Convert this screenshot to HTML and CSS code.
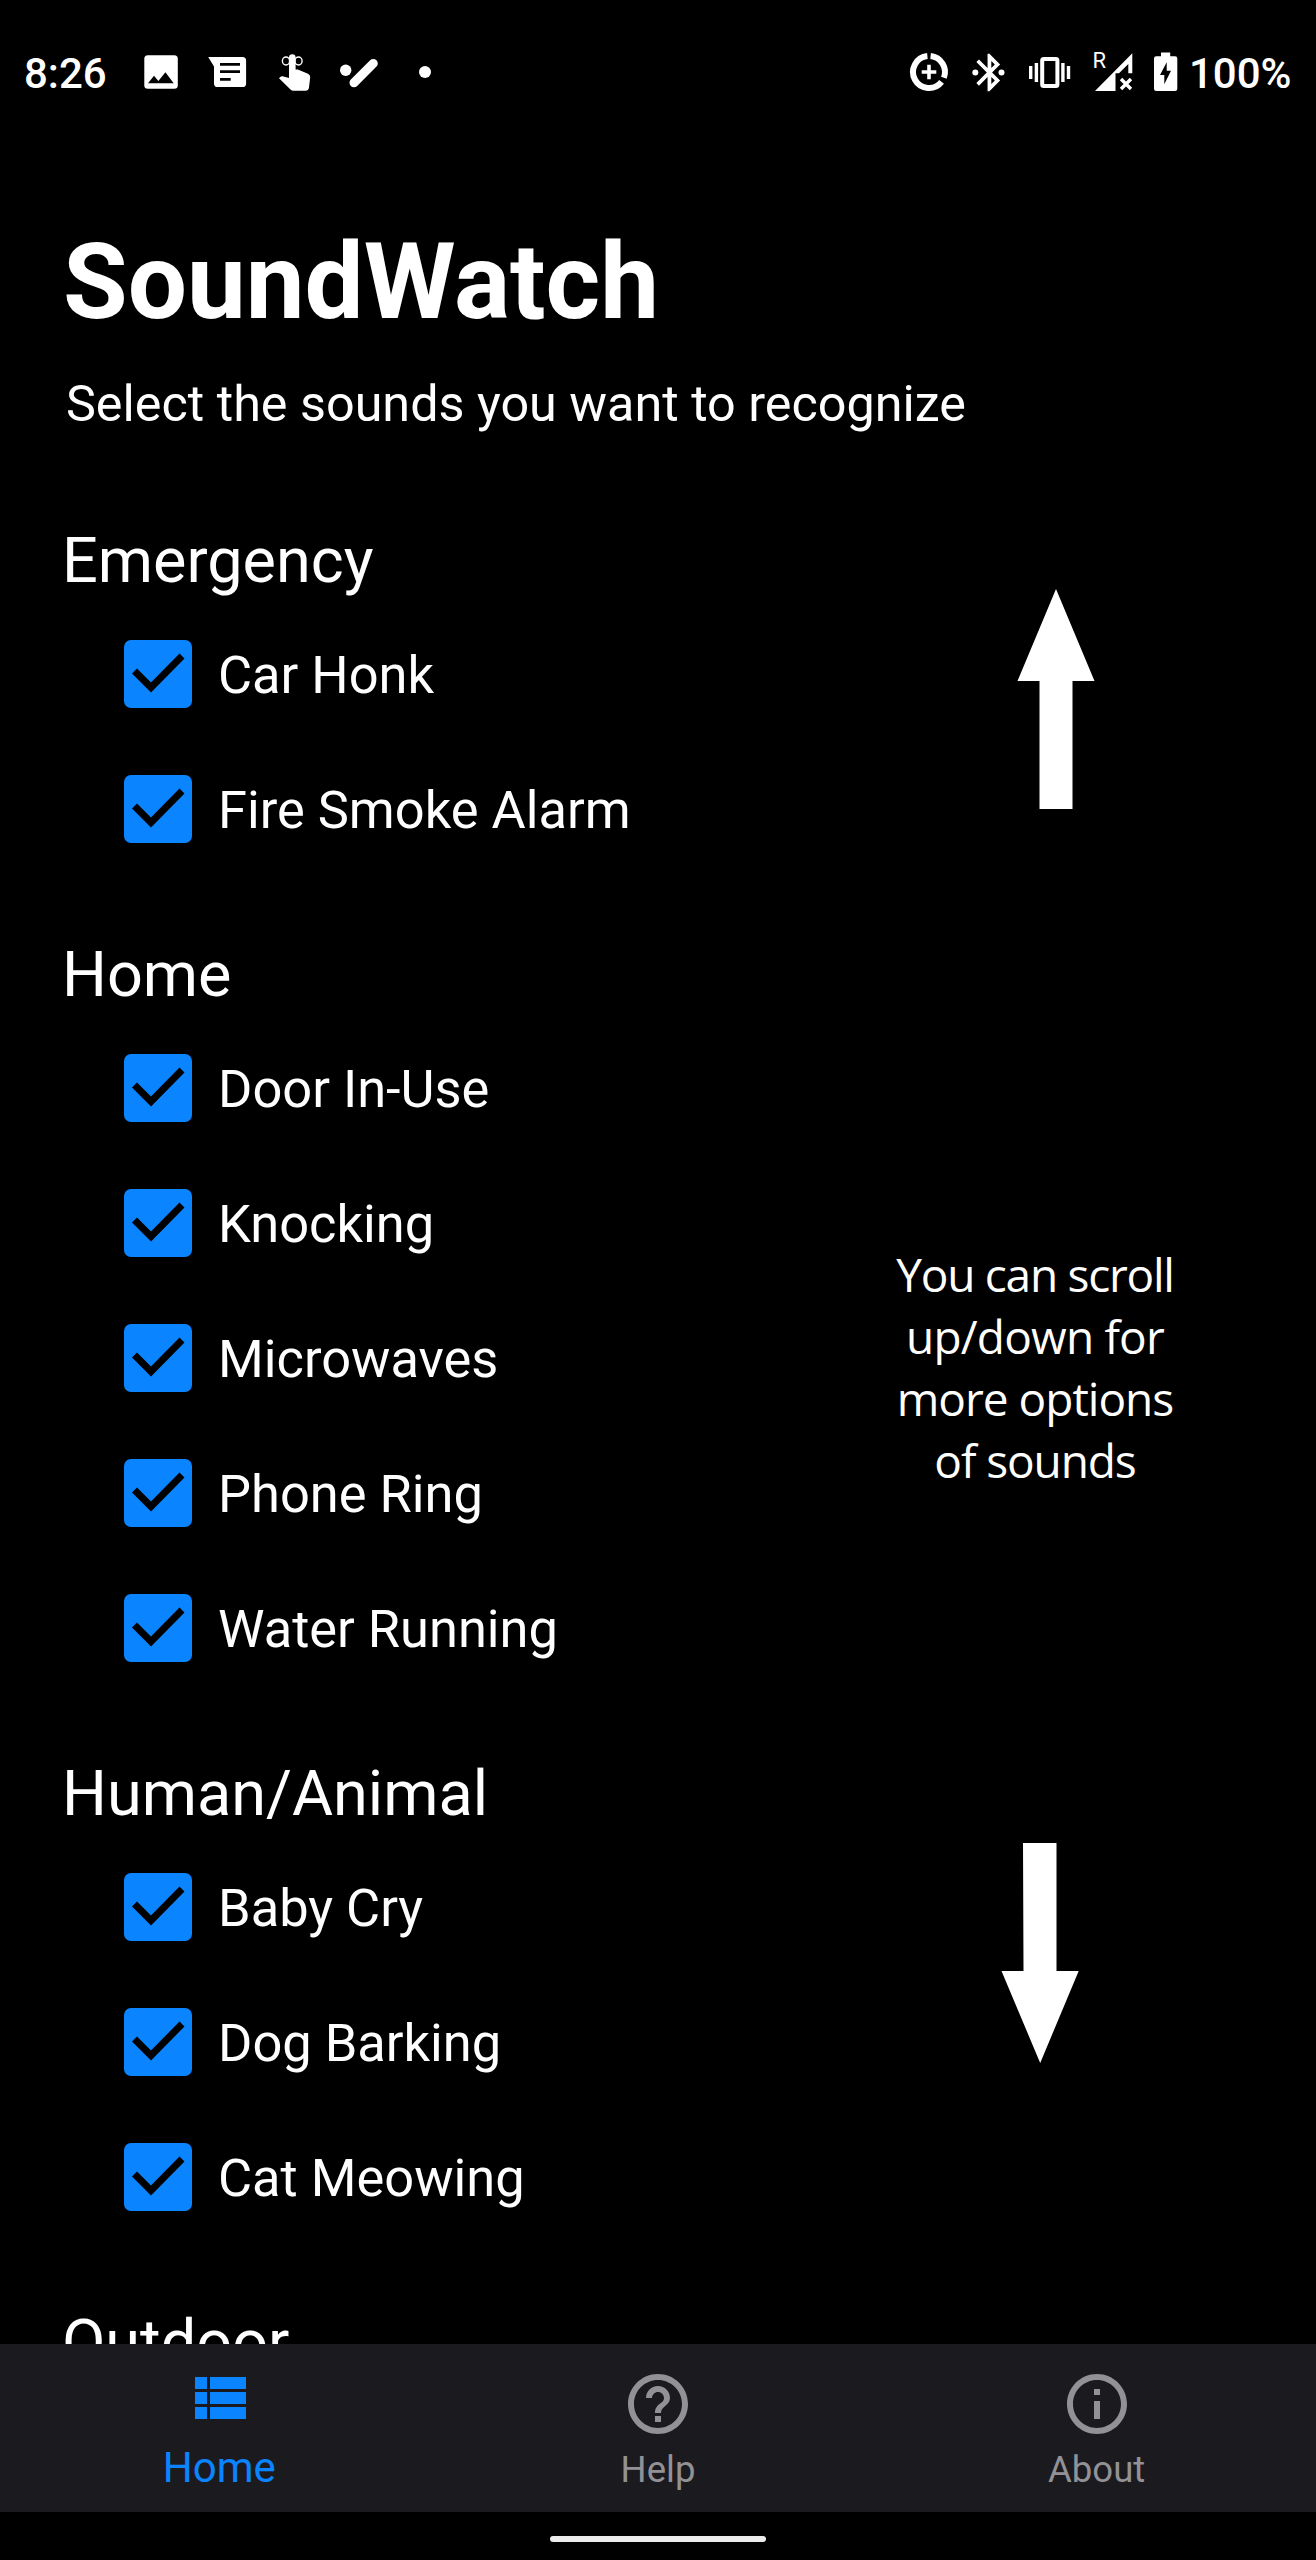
FILE: index.html
```html
<!DOCTYPE html>
<html lang="en">
<head>
<meta charset="utf-8">
<title>SoundWatch</title>
<link rel="stylesheet" href="styles.css">
</head>
<body>
<svg class="defs" width="0" height="0" aria-hidden="true">
  <symbol id="check" viewBox="0 0 68 68">
    <rect width="68" height="68" rx="7" fill="#0a84ff"/>
    <path d="M10.500 31 L27 47.500 L58 16" fill="none" stroke="#000" stroke-width="7"/>
  </symbol>
</svg>
<header class="status">
  <span class="clock">8:26</span>
  <svg class="cell" viewBox="128 39 66 66"><rect x="144.300" y="55.300" width="33.500" height="33.500" rx="3.500"/><path class="ink" d="M148 83.300l6-7.600 4.400 5.200 7-8.700 8.300 11.100z"/></svg>
  <svg class="cell" viewBox="194 39 66 66"><path d="M208.200 57H242.500a3.600 3.600 0 0 1 3.600 3.600V83.400a3.600 3.600 0 0 1-3.600 3.600H217.600a3.600 3.600 0 0 1-3.600-3.600V66.500z"/><path class="ink" d="M220 63h20v2.800h-20zM220 70.300h20v2.800h-20zM220 78h10.700v2.800h-10.700z"/></svg>
  <svg class="cell" viewBox="260 39 66 66"><path d="M289 57.500a3.300 3.300 0 0 1 6.600 0V69.500h2.200l10.200 4.200q2.400 1.200 2.200 3.600l-1.200 10.200q-.6 3.300-3.500 3.300H293.500q-1.800 0-3-1.300L279 78.200l1.600-1.500q.9-.7 2-.4L289 78z"/><g class="thin"><ellipse cx="286" cy="61" rx="3.600" ry="4"/><ellipse cx="298.500" cy="61" rx="3.600" ry="4"/></g></svg>
  <svg class="cell" viewBox="326 39 66 66"><circle cx="345.700" cy="70.300" r="5.700"/><path d="M354 82.700L373.300 63.400" stroke="#fff" stroke-width="9" stroke-linecap="round"/></svg>
  <svg class="cell" viewBox="392 39 66 66"><circle cx="425" cy="72" r="6"/></svg>
  <div class="system">
    <svg width="59" height="66" viewBox="900 39 59 66"><path class="ring" d="M930.600 56.100A16 16 0 0 1 943.900 77.700M941.600 81.900A16 16 0 1 1 927.400 56.100"/><path d="M921.700 70.200h5.500v-5.500h3.600v5.500h5.500v3.600h-5.500v5.500h-3.600v-5.500h-5.500z"/></svg>
    <svg width="60" height="66" viewBox="959 39 60 66"><path transform="translate(967 50.100) scale(1.870)" d="M17.710 7.710L12 2h-1v7.590L6.410 5 5 6.410 10.590 12 5 17.590 6.410 19 11 14.410V22h1l5.710-5.710-4.300-4.290 4.300-4.290zM13 5.830l1.880 1.880L13 9.590V5.830zm1.880 10.460L13 18.170v-3.760l1.880 1.880z"/><circle cx="975.300" cy="72.500" r="3"/><circle cx="1001.500" cy="72.500" r="3"/></svg>
    <svg width="61" height="66" viewBox="1019 39 61 66"><rect x="1042.200" y="59" width="15.200" height="27" rx="1.500" fill="none" stroke="#fff" stroke-width="4"/><path d="M1029 66h3.400v13h-3.400zM1034.700 63h3.400v19h-3.400zM1061.200 63h3.400v19h-3.400zM1066.800 66h3.400v13h-3.400z"/></svg>
    <svg width="63" height="66" viewBox="1080 39 63 66"><path d="M1095 91L1132.300 53.300V73.300H1128.300V64L1119 73.300H1115.500V91z"/><path d="M1121 79l10 10M1131 79l-10 10" stroke="#fff" stroke-width="3.400"/><text class="roam" x="1092.600" y="68">R</text></svg>
    <svg width="45" height="66" viewBox="1143 39 45 66"><path d="M1161 52.500h9.200v3.700h4.800a2.300 2.300 0 0 1 2.300 2.300V88.700a2.300 2.300 0 0 1-2.300 2.300h-18.700a2.300 2.300 0 0 1-2.300-2.300V58.500a2.300 2.300 0 0 1 2.300-2.300h4.700z"/><path class="ink" d="M1166.700 62.300L1160 75h4.300v9.300L1171 70.700h-4.300z"/></svg>
    <span class="battery">100%</span>
  </div>
</header>

<main class="content">
  <div class="sounds">
    <h1>SoundWatch</h1>
    <p class="lead">Select the sounds you want to recognize</p>
    <section>
      <h2>Emergency</h2>
      <ul>
        <li><svg><use href="#check"/></svg><span>Car Honk</span></li>
        <li><svg><use href="#check"/></svg><span>Fire Smoke Alarm</span></li>
      </ul>
    </section>
    <section>
      <h2>Home</h2>
      <ul>
        <li><svg><use href="#check"/></svg><span>Door In-Use</span></li>
        <li><svg><use href="#check"/></svg><span>Knocking</span></li>
        <li><svg><use href="#check"/></svg><span>Microwaves</span></li>
        <li><svg><use href="#check"/></svg><span>Phone Ring</span></li>
        <li><svg><use href="#check"/></svg><span>Water Running</span></li>
      </ul>
    </section>
    <section>
      <h2>Human/Animal</h2>
      <ul>
        <li><svg><use href="#check"/></svg><span>Baby Cry</span></li>
        <li><svg><use href="#check"/></svg><span>Dog Barking</span></li>
        <li><svg><use href="#check"/></svg><span>Cat Meowing</span></li>
      </ul>
    </section>
    <section>
      <h2>Outdoor</h2>
    </section>
  </div>
  <aside class="hint">
    <svg class="up" width="78" height="220" viewBox="0 0 78 220"><path d="M39 0L77.500 92H55.500V220H22.500V92H.5z"/></svg>
    <p><span class="l1">You can scroll</span><br><span class="l2">up/down for</span><br><span class="l3">more options</span><br><span class="l4">of sounds</span></p>
    <svg class="down" width="78" height="220" viewBox="0 0 78 220"><path d="M22 0H55.500V128H77.700L39.200 220L.5 128H22.500z"/></svg>
  </aside>
</main>

<nav class="tabs">
  <a class="tab active">
    <svg width="72" height="72" viewBox="0 0 72 72"><path d="M12 9h12v12H12zM27 9h36v12H27zM12 24h12v12H12zM27 24h36v12H27zM12 39h12v12H12zM27 39h36v12H27z"/></svg>
    <span>Home</span>
  </a>
  <a class="tab">
    <svg width="72" height="72" viewBox="0 0 24 24"><path d="M11 18h2v-2h-2v2zm1-16C6.480 2 2 6.480 2 12s4.480 10 10 10 10-4.480 10-10S17.520 2 12 2zm0 18c-4.410 0-8-3.590-8-8s3.590-8 8-8 8 3.590 8 8-3.590 8-8 8zm0-14c-2.210 0-4 1.790-4 4h2c0-1.100.9-2 2-2s2 .9 2 2c0 2-3 1.750-3 5h2c0-2.250 3-2.500 3-5 0-2.210-1.790-4-4-4z"/></svg>
    <span>Help</span>
  </a>
  <a class="tab">
    <svg width="72" height="72" viewBox="0 0 24 24"><path d="M11 7h2v2h-2zm0 4h2v6h-2zm1-9C6.480 2 2 6.480 2 12s4.480 10 10 10 10-4.480 10-10S17.520 2 12 2zm0 18c-4.410 0-8-3.590-8-8s3.590-8 8-8 8 3.590 8 8-3.590 8-8 8z"/></svg>
    <span>About</span>
  </a>
</nav>
<footer class="gesture"><div class="pill"></div></footer>
</body>
</html>
```

FILE: styles.css
```css
* { box-sizing: border-box; margin: 0; padding: 0; }
body {
  width: 1316px;
  height: 2560px;
  display: flex;
  flex-direction: column;
  background: #000;
  color: #fff;
  font-family: Roboto, "Liberation Sans", sans-serif;
  overflow: hidden;
}
.defs { display: none; }

.status {
  flex: none;
  height: 144px;
  display: flex;
  align-items: center;
  padding: 0 24px;
  font-size: 42px;
  font-weight: 500;
  fill: #fff;
}
.clock { width: 104px; padding-top: 3px; line-height: 50px; }
.cell { flex: none; width: 66px; height: 66px; }
.ink { fill: #000; }
.thin { fill: none; stroke: #fff; stroke-width: 1.4; }
.ring { fill: none; stroke: #fff; stroke-width: 6; }
.roam { font-size: 22px; font-weight: 400; }
.system { display: flex; align-items: center; margin-left: auto; }
.battery { width: 104px; padding: 3px 0 0 1px; line-height: 50px; white-space: nowrap; }

.content {
  flex: none;
  height: 2200px;
  display: grid;
  grid-template-columns: 860px 360px;
  overflow: hidden;
}
.sounds { padding: 77px 0 0 62px; white-space: nowrap; height: 2200px; }
h1 { font-size: 105px; font-weight: 700; line-height: 124px; padding-left: 1px; }
.lead { font-size: 50.3px; line-height: 60px; margin-top: 29px; padding-left: 4px; }
section { margin-top: 61px; }
.lead + section { margin-top: 90px; }
h2 { font-size: 63px; font-weight: 400; line-height: 74px; margin-bottom: 8px; }
section + section { margin-top: 62px; }
ul { list-style: none; padding-left: 62px; }
li { height: 135px; display: flex; align-items: center; gap: 26px; font-size: 52.4px; }
li svg { width: 68px; height: 68px; }
li span { padding-top: 3px; line-height: 62px; }

.hint {
  display: flex;
  flex-direction: column;
  align-items: flex-start;
  padding-top: 445px;
  fill: #fff;
}
.up { margin-left: 157px; }
.hint p {
  width: 350px;
  margin-top: 434px;
  font: 46px/62px "Open Sans", "Noto Sans", sans-serif;
  text-align: center;
}
.l1 { letter-spacing: -1.25px; }
.l2 { letter-spacing: -0.8px; }
.l3 { letter-spacing: -1px; }
.l4 { letter-spacing: -1.1px; }
.down { margin: 352px 0 0 141px; }

.tabs {
  flex: none;
  height: 168px;
  display: grid;
  grid-template-columns: repeat(3, 1fr);
  background: #1b1b1f;
}
.tab {
  display: flex;
  flex-direction: column;
  align-items: center;
  padding-top: 24px;
  color: #929196;
  fill: #929196;
  font-size: 36.5px;
}
.tab svg { flex: none; }
.tab span { line-height: 48px; margin-top: 6px; }
.active { color: #0a84ff; fill: #0a84ff; font-size: 42px; }
.active span { margin-top: 4px; }
.gesture { flex: 1; display: flex; justify-content: center; padding-top: 24px; }
.pill { width: 216px; height: 6px; border-radius: 3px; background: #ececec; }
```
